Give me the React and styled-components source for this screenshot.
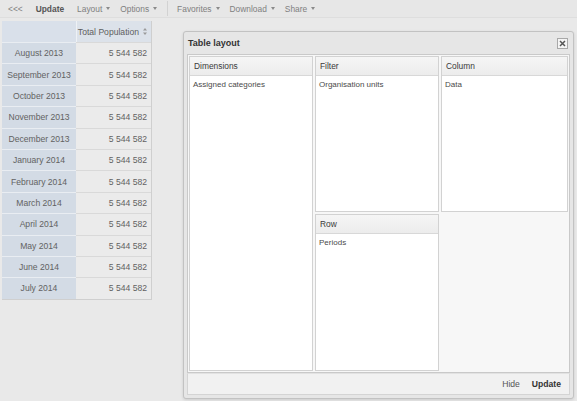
import React from "react";
import styled, { createGlobalStyle } from "styled-components";

const Global = createGlobalStyle`
  html, body { margin: 0; padding: 0; }
  body {
    width: 577px; height: 401px; overflow: hidden;
    background: #e9e9e9;
    font-family: "Liberation Sans", Arial, sans-serif;
    font-size: 8.5px; color: #555;
  }
`;

const Page = styled.div`
  position: relative;
  width: 577px;
  height: 401px;
  display: flex;
  flex-direction: column;
`;

const Toolbar = styled.div`
  height: 17px;
  flex: none;
  display: flex;
  align-items: center;
  padding-left: 8px;
  background: #e7e7e7;
  border-bottom: 1px solid #dedede;
  font-size: 8.4px;
`;

const ToolItem = styled.span`
  color: ${(p) => (p.$bold ? "#555" : "#808080")};
  font-weight: ${(p) => (p.$bold ? "bold" : "normal")};
  margin-right: ${(p) => p.$mr || 10}px;
  white-space: nowrap;
  display: flex;
  align-items: center;
`;

const Caret = styled.span`
  display: inline-block;
  margin-left: 4px;
  width: 0;
  height: 0;
  border-left: 2.5px solid transparent;
  border-right: 2.5px solid transparent;
  border-top: 3px solid #8a8a8a;
`;

const Sep = styled.span`
  width: 1px;
  height: 15px;
  background: #d2d2d2;
  margin-right: 9px;
`;

const Main = styled.div`
  flex: 1;
  padding: 3px 0 0 2px;
`;

const Table = styled.div`
  display: grid;
  grid-template-columns: 74px 75px;
  width: 149px;
  border-right: 1px solid #cfcfcf;
  border-bottom: 1px solid #cfcfcf;
  font-size: 8.6px;
`;

const HeadCell = styled.div`
  height: 21px;
  display: flex;
  align-items: center;
  justify-content: flex-end;
  padding-right: 4px;
  background: ${(p) => (p.$corner ? "#d9e0ea" : "#dce2ea")};
  color: #5e5e5e;
  border-left: ${(p) => (p.$corner ? "none" : "1px solid #eef1f5")};
  box-sizing: border-box;
  white-space: nowrap;
`;

const DimCell = styled.div`
  height: 21.4px;
  display: flex;
  align-items: center;
  justify-content: center;
  background: #d3dbe5;
  color: #626262;
  border-top: 1px solid #e9edf2;
  box-sizing: border-box;
  white-space: nowrap;
`;

const ValCell = styled.div`
  height: 21.4px;
  display: flex;
  align-items: center;
  justify-content: flex-end;
  padding-right: 4px;
  background: #ebebeb;
  color: #626262;
  border-top: 1px solid #d9d9d9;
  box-sizing: border-box;
`;

const SortIcon = styled.svg`
  margin-left: 4px;
`;

const Window = styled.div`
  position: absolute;
  left: 183px;
  top: 31px;
  width: 391px;
  box-sizing: border-box;
  background: #e6e6e6;
  border: 1px solid #c2c2c2;
  border-radius: 3px;
  box-shadow: 0 1px 3px rgba(0, 0, 0, 0.12);
  display: flex;
  flex-direction: column;
  padding: 0 3px 3px 3px;
`;

const TitleBar = styled.div`
  height: 22px;
  display: flex;
  align-items: center;
  justify-content: space-between;
  padding-left: 1px;
  padding-right: 2px;
`;

const Title = styled.span`
  font-weight: bold;
  color: #333;
  font-size: 9px;
`;

const Close = styled.div`
  width: 9px;
  height: 9px;
  border: 1px solid #a8a8a8;
  background: #f4f4f4;
  display: flex;
  align-items: center;
  justify-content: center;
`;

const Body = styled.div`
  background: #f7f7f7;
  border: 1px solid #c9c9c9;
  display: grid;
  grid-template-columns: 124px 124px 127px;
  grid-template-rows: 156px 157px;
  column-gap: 2px;
  row-gap: 2px;
  padding: 1px;
`;

const Panel = styled.div`
  grid-row: ${(p) => p.$row};
  grid-column: ${(p) => p.$col};
  display: flex;
  flex-direction: column;
  border: 1px solid #d2d2d2;
  background: #fff;
  min-height: 0;
  box-sizing: border-box;
`;

const PanelHead = styled.div`
  height: 18px;
  flex: none;
  display: flex;
  align-items: center;
  padding-left: 4px;
  background: linear-gradient(#f5f5f5, #ececec);
  border-bottom: 1px solid #d8d8d8;
  color: #3a3a3a;
  font-size: 8.4px;
`;

const PanelItem = styled.div`
  padding: 4px 3px;
  color: #4a4a4a;
  font-size: 8px;
`;

const Footer = styled.div`
  height: 20px;
  flex: none;
  display: flex;
  align-items: center;
  justify-content: flex-end;
  gap: 12px;
  padding-right: 8px;
  background: #f1f1f1;
  border: 1px solid #d4d4d4;
  border-top: 1px solid #e2e2e2;
`;

const FootBtn = styled.span`
  font-weight: ${(p) => (p.$bold ? "bold" : "normal")};
  color: ${(p) => (p.$bold ? "#333" : "#555")};
  font-size: 8.6px;
`;

const rows = [
  "August 2013", "September 2013", "October 2013", "November 2013",
  "December 2013", "January 2014", "February 2014", "March 2014",
  "April 2014", "May 2014", "June 2014", "July 2014",
];

export default function App() {
  return (
    <>
      <Global />
      <Page>
        <Toolbar>
          <ToolItem $mr={13}>&lt;&lt;&lt;</ToolItem>
          <ToolItem $bold $mr={13}>Update</ToolItem>
          <ToolItem>Layout<Caret /></ToolItem>
          <ToolItem>Options<Caret /></ToolItem>
          <Sep />
          <ToolItem>Favorites<Caret /></ToolItem>
          <ToolItem>Download<Caret /></ToolItem>
          <ToolItem>Share<Caret /></ToolItem>
        </Toolbar>
        <Main>
          <Table>
            <HeadCell $corner />
            <HeadCell>
              Total Population
              <SortIcon width="4" height="7" viewBox="0 0 4 7">
                <path d="M2 0 L4 2.5 H0 Z M0 4.5 H4 L2 7 Z" fill="#999" />
              </SortIcon>
            </HeadCell>
            {rows.map((r) => (
              <React.Fragment key={r}>
                <DimCell>{r}</DimCell>
                <ValCell>5 544 582</ValCell>
              </React.Fragment>
            ))}
          </Table>
        </Main>
        <Window>
          <TitleBar>
            <Title>Table layout</Title>
            <Close>
              <svg width="7" height="7" viewBox="0 0 7 7">
                <path d="M1 1 L6 6 M6 1 L1 6" stroke="#555" strokeWidth="1.5" />
              </svg>
            </Close>
          </TitleBar>
          <Body>
            <Panel $row="1 / 3" $col="1">
              <PanelHead>Dimensions</PanelHead>
              <PanelItem>Assigned categories</PanelItem>
            </Panel>
            <Panel $row="1" $col="2">
              <PanelHead>Filter</PanelHead>
              <PanelItem>Organisation units</PanelItem>
            </Panel>
            <Panel $row="1" $col="3">
              <PanelHead>Column</PanelHead>
              <PanelItem>Data</PanelItem>
            </Panel>
            <Panel $row="2" $col="2">
              <PanelHead>Row</PanelHead>
              <PanelItem>Periods</PanelItem>
            </Panel>
          </Body>
          <Footer>
            <FootBtn>Hide</FootBtn>
            <FootBtn $bold>Update</FootBtn>
          </Footer>
        </Window>
      </Page>
    </>
  );
}
